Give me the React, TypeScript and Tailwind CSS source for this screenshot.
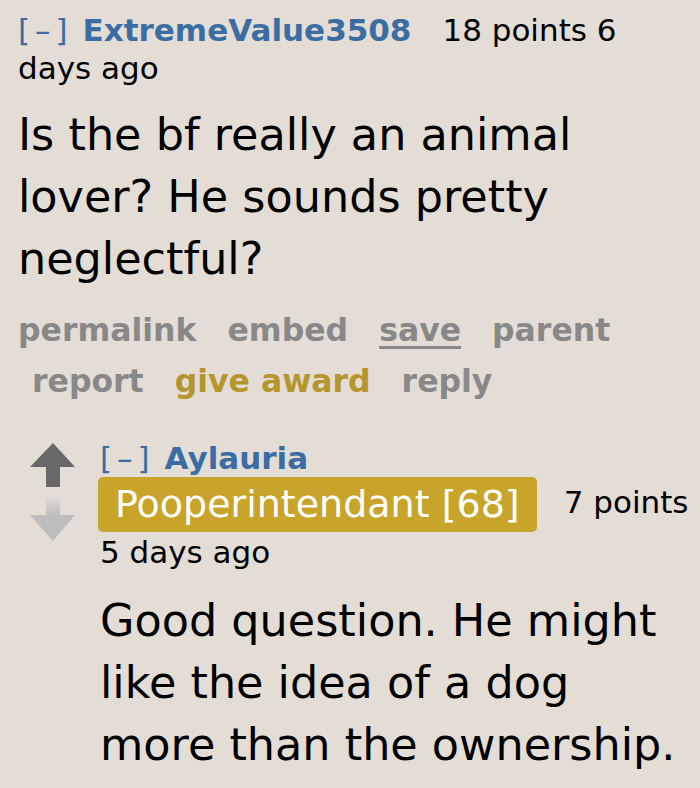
export default function App() {
  const links = ['permalink', 'embed', 'save', 'parent', 'report', 'give award', 'reply'];
  return (
    <div className="w-[700px] h-[788px] overflow-hidden bg-[#e3ddd6] font-['DejaVu_Sans',Verdana,sans-serif] text-black">
      <div className="pl-[18px] pt-[11px]">
        <div className="w-[660px] text-[31px] leading-[38px]">
          <span className="text-[#3b6da3] tracking-[5px]">[–]</span>{' '}
          <span className="font-bold text-[#3b6da3]">ExtremeValue3508</span>
          <span className="ml-[31px]">18 points 6 days ago</span>
        </div>
        <p className="mt-[17px] w-[610px] text-[44.5px] leading-[62px]">
          Is the bf really an animal lover? He sounds pretty neglectful?
        </p>
        <ul className="mt-[15px] flex flex-wrap text-[31.5px] leading-[51px] font-bold text-[#888]">
          {links.map((l, i) => (
            <li
              key={l}
              className={`${i === 0 ? 'pl-0' : 'pl-[14px]'} pr-[17px] ${
                l === 'give award' ? 'text-[#b4962c]' : ''
              }`}
            >
              <span className={l === 'save' ? 'underline underline-offset-[5px]' : ''}>{l}</span>
            </li>
          ))}
        </ul>
      </div>

      <div className="mt-[32px] flex pl-[30px]">
        <div className="w-[70px] pt-[4px] shrink-0">
          <svg width="46" height="100" viewBox="0 0 46 100">
            <defs>
              <linearGradient id="stem" x1="0" y1="0" x2="0" y2="1">
                <stop offset="0" stopColor="#e2ddd8" />
                <stop offset="1" stopColor="#bdbdbd" />
              </linearGradient>
            </defs>
            <polygon points="23,0 45,24 0,24" fill="#686868" />
            <rect x="16" y="23" width="14" height="21" fill="#686868" />
            <rect x="16" y="52" width="14" height="21" fill="url(#stem)" />
            <polygon points="0,72 45,72 23,98" fill="#bdbdbd" />
          </svg>
        </div>
        <div className="flex-1">
          <div className="text-[31px] leading-[38px]">
            <span className="text-[#3b6da3] tracking-[5px]">[–]</span>{' '}
            <span className="font-bold text-[#3b6da3]">Aylauria</span>
          </div>
          <div className="flex items-center">
            <span className="-ml-[2px] inline-block h-[55px] rounded-[5px] bg-[#c8a52a] px-[17px] text-[38px] leading-[55px] text-white whitespace-nowrap">
              Pooperintendant [68]
            </span>
            <span className="ml-[27px] text-[31px] leading-[38px] -mt-[6px] whitespace-nowrap">7 points</span>
          </div>
          <div className="text-[31px] leading-[38px] mt-[1px]">5 days ago</div>
          <p className="mt-[19px] w-[582px] text-[44.5px] leading-[62px]">
            Good question. He might like the idea of a dog more than the ownership.
          </p>
        </div>
      </div>
    </div>
  );
}
